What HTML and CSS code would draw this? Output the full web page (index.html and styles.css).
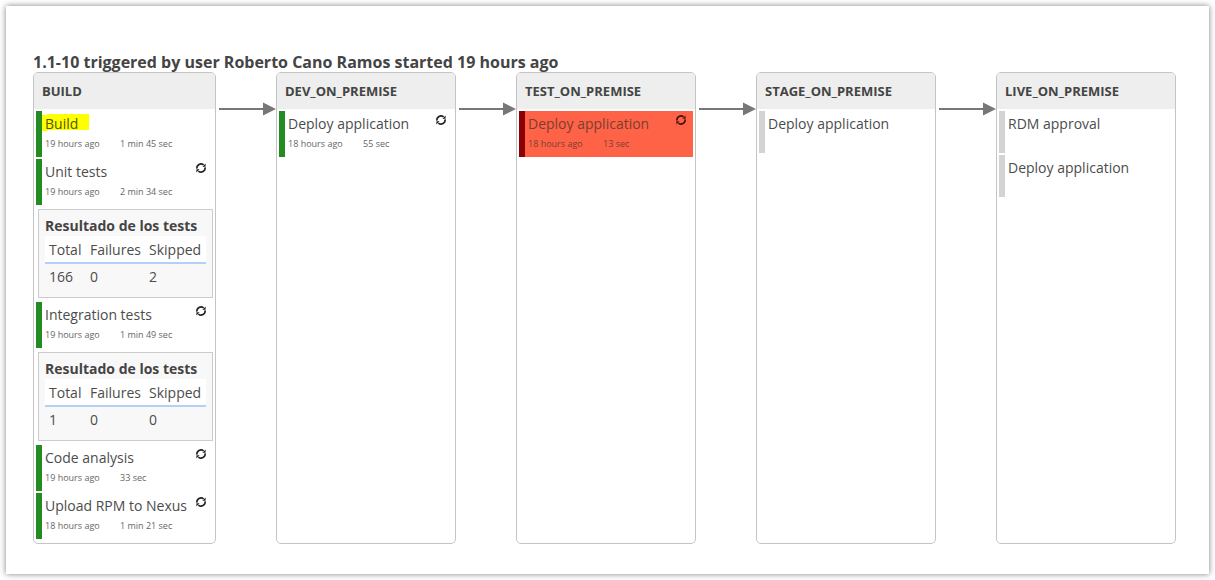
FILE: index.html
```html
<!DOCTYPE html>
<html lang="en">
<head>
<meta charset="utf-8">
<title>Delivery pipeline</title>
<link rel="stylesheet" href="styles.css">
</head>
<body>
<svg class="defs" width="0" height="0" aria-hidden="true">
  <symbol id="rerun" viewBox="0 0 12 12">
    <path d="M1.9 6.6A4.1 4.1 0 0 1 8.6 2.9M10.1 5.4A4.1 4.1 0 0 1 3.4 9.1" fill="none" stroke="currentColor" stroke-width="1.6"/>
    <path d="M10.6 1.6V4.8H7.4ZM1.4 10.4V7.2H4.6Z" fill="currentColor"/>
  </symbol>
  <symbol id="arrow" viewBox="0 0 57 14">
    <path d="M0 7H46" stroke="#777" stroke-width="2"/>
    <path d="M44 .5L57 7L44 13.5Z" fill="#777"/>
  </symbol>
</svg>
<main class="panel">
  <h1 class="title">1.1-10 triggered by user Roberto Cano Ramos started 19 hours ago</h1>
  <div class="pipeline">
    <section class="stage stage-wide">
      <h2 class="stage-name">BUILD</h2>
      <div class="task success">
        <div class="task-name"><span class="mark">Build</span></div>
        <div class="meta"><span class="when">19 hours ago</span><span>1 min 45 sec</span></div>
      </div>
      <div class="task success">
        <div class="task-name">Unit tests</div>
        <div class="meta"><span class="when">19 hours ago</span><span>2 min 34 sec</span></div>
        <svg class="rerun"><use href="#rerun"/></svg>
      </div>
      <div class="results">
        <h3 class="results-title">Resultado de los tests</h3>
        <div class="row head"><span>Total</span><span>Failures</span><span>Skipped</span></div>
        <div class="row"><span>166</span><span>0</span><span>2</span></div>
      </div>
      <div class="task success">
        <div class="task-name">Integration tests</div>
        <div class="meta"><span class="when">19 hours ago</span><span>1 min 49 sec</span></div>
        <svg class="rerun"><use href="#rerun"/></svg>
      </div>
      <div class="results">
        <h3 class="results-title">Resultado de los tests</h3>
        <div class="row head"><span>Total</span><span>Failures</span><span>Skipped</span></div>
        <div class="row"><span>1</span><span>0</span><span>0</span></div>
      </div>
      <div class="task success">
        <div class="task-name">Code analysis</div>
        <div class="meta"><span class="when">19 hours ago</span><span>33 sec</span></div>
        <svg class="rerun"><use href="#rerun"/></svg>
      </div>
      <div class="task success">
        <div class="task-name">Upload RPM to Nexus</div>
        <div class="meta"><span class="when">18 hours ago</span><span>1 min 21 sec</span></div>
        <svg class="rerun"><use href="#rerun"/></svg>
      </div>
    </section>
    <svg class="arrow"><use href="#arrow"/></svg>
    <section class="stage">
      <h2 class="stage-name">DEV_ON_PREMISE</h2>
      <div class="task success">
        <div class="task-name">Deploy application</div>
        <div class="meta"><span class="when">18 hours ago</span><span>55 sec</span></div>
        <svg class="rerun"><use href="#rerun"/></svg>
      </div>
    </section>
    <svg class="arrow"><use href="#arrow"/></svg>
    <section class="stage">
      <h2 class="stage-name">TEST_ON_PREMISE</h2>
      <div class="task failed">
        <div class="task-name">Deploy application</div>
        <div class="meta"><span class="when">18 hours ago</span><span>13 sec</span></div>
        <svg class="rerun"><use href="#rerun"/></svg>
      </div>
    </section>
    <svg class="arrow"><use href="#arrow"/></svg>
    <section class="stage">
      <h2 class="stage-name">STAGE_ON_PREMISE</h2>
      <div class="task idle"><div class="task-name">Deploy application</div></div>
    </section>
    <svg class="arrow"><use href="#arrow"/></svg>
    <section class="stage">
      <h2 class="stage-name">LIVE_ON_PREMISE</h2>
      <div class="task idle"><div class="task-name">RDM approval</div></div>
      <div class="task idle"><div class="task-name">Deploy application</div></div>
    </section>
  </div>
</main>
</body>
</html>
```
FILE: styles.css
```css
* { box-sizing: border-box; }
body {
  margin: 0;
  padding: 6px;
  height: 580px;
  overflow: hidden;
  background: #fff;
  color: #4c4c4c;
  font-family: "Open Sans", "Noto Sans", sans-serif;
}
.defs { position: absolute; }
.panel {
  width: 1203px;
  height: 568px;
  padding: 45px 27px 0;
  background: #fff;
  box-shadow: 0 0 6px rgba(0, 0, 0, .5);
}
.title {
  margin: 0;
  height: 21px;
  color: #444;
  font-size: 16px;
  font-weight: 700;
  line-height: 22px;
  white-space: nowrap;
}
.pipeline { display: flex; }
.stage {
  width: 180px;
  height: 472px;
  border: 1px solid #c4c4c4;
  border-radius: 5px;
  overflow: hidden;
}
.stage-wide { width: 183px; }
.stage-name {
  margin: 0 0 2px;
  height: 36px;
  padding-left: 8px;
  background: #eee;
  color: #444;
  font-size: 13px;
  font-weight: 700;
  line-height: 37px;
}
.arrow {
  flex: none;
  width: 57px;
  height: 14px;
  margin: 30px 0 0 3px;
}
.task {
  position: relative;
  height: 46px;
  margin: 0 2px 2px;
  padding-left: 3px;
  border-left: 6px solid;
}
.success { border-color: #228b22; }
.failed {
  border-color: #8b0000;
  background: #ff6347;
}
.failed .task-name, .failed .meta { color: #7c3d31; }
.idle {
  height: 42px;
  border-color: #d3d3d3;
}
.task-name {
  height: 26px;
  font-size: 14px;
  line-height: 26px;
  white-space: nowrap;
}
.mark {
  display: inline-block;
  height: 17px;
  margin-left: -3px;
  padding: 0 11px 0 3px;
  background:
    linear-gradient(#ff0, #ff0) 0 100% / 6px 16px no-repeat,
    linear-gradient(#ff0, #ff0) 5px 0 / 100% 16px no-repeat;
  color: #55550f;
  line-height: 20px;
}
.meta {
  display: flex;
  height: 14px;
  color: #666;
  font-size: 9px;
  line-height: 14px;
}
.when { width: 75px; }
.rerun {
  position: absolute;
  top: 3px;
  right: 6px;
  width: 12px;
  height: 12px;
  color: #222;
}
.failed .rerun { color: #411; }
.results {
  height: 89px;
  margin: 4px 2px 4px 4px;
  padding: 5px 6px;
  border: 1px solid #ccc;
  background: #f9f8f9;
}
.results-title {
  margin: 0;
  height: 21px;
  color: #444;
  font-size: 14px;
  font-weight: 700;
  line-height: 22px;
  white-space: nowrap;
}
.row {
  display: grid;
  grid-template-columns: 41px 59px auto;
  height: 28px;
  padding-left: 4px;
  font-size: 14px;
  line-height: 26px;
}
.head {
  background: #fff;
  border-bottom: 2px solid #b3d1f5;
  line-height: 27px;
}
```
